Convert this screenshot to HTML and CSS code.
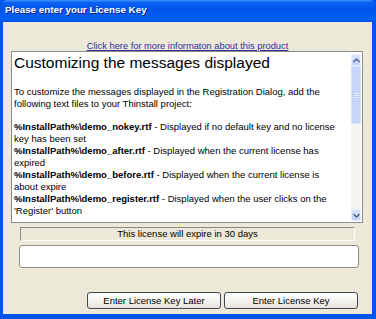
FILE: index.html
```html
<!DOCTYPE html>
<html lang="en">
<head>
    <meta charset="UTF-8">
    <title>Please enter your License Key</title>
    <link rel="stylesheet" href="styles.css">
</head>
<body>

<div class="window">
    <div class="titlebar">Please enter your License Key</div>

    <div class="client">
        <!-- Link -->
        <div class="link-row">
            <a href="#" class="info-link">Click here for more informaton about this product</a>
        </div>

        <!-- Message box -->
        <div class="message-box">
            <div class="message">
                <h1>Customizing the messages displayed</h1>
                <div class="para">
                    <div class="line">To customize the messages displayed in the Registration Dialog, add the</div>
                    <div class="line">following text files to your Thinstall project:</div>
                </div>
                <div class="para files">
                    <div class="line"><b>%InstallPath%\demo_nokey.rtf</b> - Displayed if no default key and no license</div>
                    <div class="line">key has been set</div>
                    <div class="line"><b>%InstallPath%\demo_after.rtf</b> - Displayed when the current license has</div>
                    <div class="line">expired</div>
                    <div class="line"><b>%InstallPath%\demo_before.rtf</b> - Displayed when the current license is</div>
                    <div class="line">about expire</div>
                    <div class="line"><b>%InstallPath%\demo_register.rtf</b> - Displayed when the user clicks on the</div>
                    <div class="line">'Register' button</div>
                </div>
            </div>
            <div class="scrollbar">
                <div class="sb-btn">
                    <svg width="7" height="5" viewBox="0 0 7 5"><path d="M0.5 4 L3.5 1 L6.5 4" fill="none" stroke="#4d6185" stroke-width="1.4"/></svg>
                </div>
                <div class="sb-thumb"><span class="grip"></span></div>
                <div class="sb-track"></div>
                <div class="sb-btn">
                    <svg width="7" height="5" viewBox="0 0 7 5"><path d="M0.5 1 L3.5 4 L6.5 1" fill="none" stroke="#4d6185" stroke-width="1.4"/></svg>
                </div>
            </div>
        </div>

        <!-- Status -->
        <div class="status">This license will expire in 30 days</div>

        <!-- Key input -->
        <input type="text" class="key-input">

        <!-- Buttons -->
        <div class="buttons">
            <button class="xp-btn">Enter License Key Later</button>
            <button class="xp-btn">Enter License Key</button>
        </div>
    </div>
</div>

</body>
</html>
```

FILE: styles.css
```css
body {
    margin: 0;
    padding: 0;
    font-family: "Liberation Sans", Arial, sans-serif;
    background-color: #0055ea;
}
.window {
    width: 376px;
    height: 319px;
    display: flex;
    flex-direction: column;
    background-color: #0055ea;
    border-radius: 7px 7px 0 0;
}
.titlebar {
    height: 22px;
    line-height: 20px;
    padding-left: 5px;
    color: #fff;
    font-weight: bold;
    font-size: 9.8px;
    text-shadow: 1px 1px #0f1e89;
    border-radius: 7px 7px 0 0;
    background: linear-gradient(#3d95ff 0%, #0a5ff2 12%, #0054e8 45%, #0062f8 85%, #0052e6 100%);
}
.client {
    flex: 1;
    margin: 0 4px 5px 3px;
    padding: 16px 0 5px 0;
    background-color: #ece9d8;
    display: flex;
    flex-direction: column;
}
.link-row {
    height: 12px;
    line-height: 12px;
    text-align: center;
}
.info-link {
    font-size: 9.3px;
    color: #2f2f9e;
    text-decoration: underline;
}
.message-box {
    margin: 1px 9px 0 8px;
    height: 170px;
    border: 1px solid #8c8c8c;
    background-color: #fff;
    display: flex;
}
.message {
    flex: 1;
    overflow: hidden;
    padding: 2px 4px 0 2px;
    font-size: 9.5px;
    color: #000;
}
.message h1 {
    margin: 0;
    font-size: 15.5px;
    line-height: 18px;
    font-weight: normal;
}
.para {
    margin-top: 14px;
}
.para.files {
    margin-top: 11px;
}
.line {
    height: 12px;
    line-height: 12px;
    white-space: nowrap;
}
.scrollbar {
    width: 10px;
    margin: 2px 1px 1px 0;
    display: flex;
    flex-direction: column;
    background-color: #f3f4f8;
}
.sb-btn {
    height: 12px;
    background: linear-gradient(#dbe5fd, #c1d2fa);
    border: 1px solid #e6edfd;
    border-radius: 2px;
    box-sizing: border-box;
    display: flex;
    align-items: center;
    justify-content: center;
}
.sb-thumb {
    height: 58px;
    background-color: #c6d6fb;
    border: 1px solid #d6e1fc;
    border-radius: 2px;
    box-sizing: border-box;
    display: flex;
    align-items: center;
    justify-content: center;
}
.grip {
    width: 5px;
    height: 5px;
    background: repeating-linear-gradient(#eef3fe 0 1px, #b5c8f5 1px 2px);
}
.sb-track {
    flex: 1;
    background-color: #f4f4f0;
}
.status {
    margin: 4px 17px 0 17px;
    height: 14px;
    box-sizing: border-box;
    border-top: 1px solid #8a8a84;
    border-left: 1px solid #8a8a84;
    border-right: 1px solid #fff;
    border-bottom: 1px solid #fff;
    font-size: 9.5px;
    line-height: 12px;
    text-align: center;
    color: #000;
}
.key-input {
    margin: 4px 13px 0 16px;
    height: 23px;
    box-sizing: border-box;
    border: 1px solid #8d8d8d;
    border-radius: 3px;
    background-color: #fff;
    padding: 0 4px;
}
.buttons {
    margin: 24px 14px 0 0;
    display: flex;
    justify-content: flex-end;
    gap: 3px;
}
.xp-btn {
    width: 134px;
    height: 17px;
    padding: 0;
    border: 1px solid #3f4a56;
    border-radius: 3px;
    background: linear-gradient(#ffffff 0%, #f4f3ee 50%, #e6e3d8 100%);
    font-family: "Liberation Sans", Arial, sans-serif;
    font-size: 9.5px;
    color: #000;
}
```
